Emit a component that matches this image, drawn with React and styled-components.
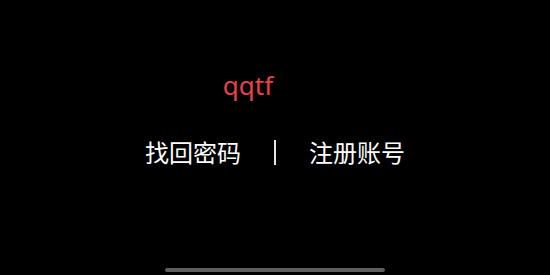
import React from "react";
import styled, { createGlobalStyle } from "styled-components";

const GlobalStyle = createGlobalStyle`
  html, body {
    margin: 0;
    padding: 0;
    background: #000;
  }
  * {
    box-sizing: border-box;
  }
`;

const Screen = styled.div`
  width: 550px;
  height: 275px;
  background: #000;
  display: flex;
  flex-direction: column;
  align-items: center;
  font-family: "Noto Sans", "Noto Sans CJK SC", sans-serif;
  overflow: hidden;
`;

const Brand = styled.div`
  margin-top: 68px;
  margin-right: 54px;
  color: #e8414b;
  font-size: 26px;
  line-height: 34px;
`;

const LinkRow = styled.div`
  margin-top: 34px;
  display: flex;
  align-items: center;
  gap: 33px;
`;

const TextLink = styled.a`
  color: #fff;
  font-family: "Noto Sans CJK SC", sans-serif;
  font-size: 24px;
  line-height: 32px;
  text-decoration: none;
  cursor: pointer;
`;

const Divider = styled.span`
  width: 2px;
  height: 25px;
  background: #e6e6e6;
`;

const HomeBar = styled.div`
  margin-top: auto;
  margin-bottom: 3px;
  width: 220px;
  height: 4px;
  border-radius: 2px;
  background: #5e5e5e;
`;

export default function App() {
  return (
    <>
      <GlobalStyle />
      <Screen>
        <Brand>qqtf</Brand>
        <LinkRow>
          <TextLink>找回密码</TextLink>
          <Divider />
          <TextLink>注册账号</TextLink>
        </LinkRow>
        <HomeBar />
      </Screen>
    </>
  );
}
